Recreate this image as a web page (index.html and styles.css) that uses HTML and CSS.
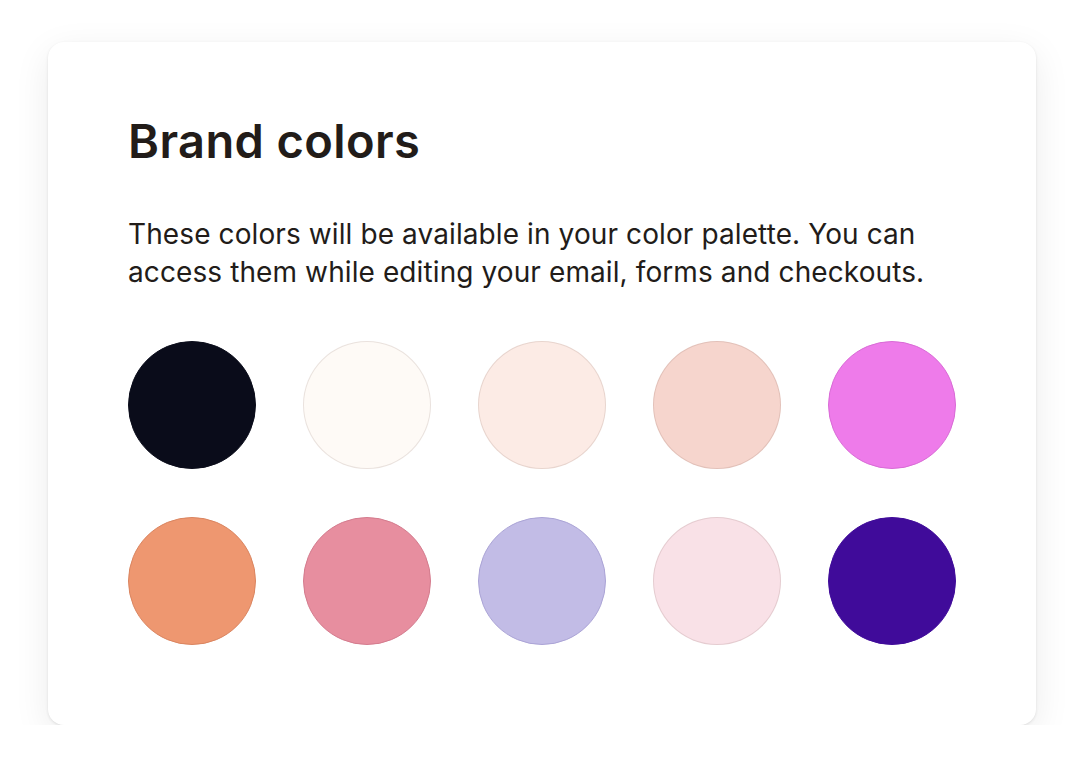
FILE: index.html
```html
<!DOCTYPE html>
<html lang="en">
<head>
<meta charset="utf-8">
<title>Brand colors</title>
<link rel="stylesheet" href="styles.css">
</head>
<body>
<main class="page">
  <section class="card">
    <h1 class="title">Brand colors</h1>
    <p class="desc">These colors will be available in your color palette. You can access them while editing your email, forms and checkouts.</p>
    <div class="swatches">
      <span class="swatch c1"></span>
      <span class="swatch c2"></span>
      <span class="swatch c3"></span>
      <span class="swatch c4"></span>
      <span class="swatch c5"></span>
      <span class="swatch c6"></span>
      <span class="swatch c7"></span>
      <span class="swatch c8"></span>
      <span class="swatch c9"></span>
      <span class="swatch c10"></span>
    </div>
  </section>
</main>
</body>
</html>
```
FILE: styles.css
```css
html, body {
  margin: 0;
  padding: 0;
  background: #ffffff;
}
body {
  font-family: Inter, "Noto Sans", sans-serif;
  color: #221c19;
}
.page {
  padding: 42px 0 0 48px;
  display: flex;
}
.card {
  width: 988px;
  box-sizing: border-box;
  padding: 67px 80px 80px;
  background: #ffffff;
  border-radius: 16px;
  box-shadow: 0 1px 3px rgba(0, 0, 0, 0.1), 0 10px 36px rgba(0, 0, 0, 0.08);
}
.title {
  margin: 0;
  font-size: 47px;
  line-height: 64px;
  font-weight: 600;
  letter-spacing: 0.4px;
}
.desc {
  margin: 43px 0 0;
  font-size: 28px;
  line-height: 37.5px;
  font-weight: 400;
  letter-spacing: 0.1px;
  width: 810px;
}
.swatches {
  margin-top: 50px;
  display: grid;
  grid-template-columns: repeat(5, 128px);
  column-gap: 47px;
  row-gap: 48px;
}
.swatch {
  width: 128px;
  height: 128px;
  box-sizing: border-box;
  border-radius: 50%;
  border: 1.5px solid rgba(60, 20, 10, 0.1);
}
.c1 { background: #0a0c1a; border-color: #0a0c1a; }
.c2 { background: #fefaf6; }
.c3 { background: #fcebe5; }
.c4 { background: #f6d5cd; }
.c5 { background: #ee7bea; border-color: #d96bd6; }
.c6 { background: #ee9770; border-color: #da8560; }
.c7 { background: #e78e9f; border-color: #d47c8e; }
.c8 { background: #c2bce6; border-color: #aba4d6; }
.c9 { background: #f9e1e7; }
.c10 { background: #400b9a; border-color: #400b9a; }
```
